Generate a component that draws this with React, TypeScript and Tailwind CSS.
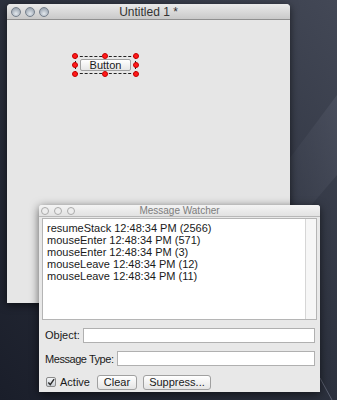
import React from "react";

const font = { fontFamily: '"Liberation Sans", Arial, sans-serif' };

function Lights({ active }: { active: boolean }) {
	if (active) {
		return (
			<div className="flex gap-[4px]">
				{[0, 1, 2].map((i) => (
					<span
						key={i}
						className="block w-[10px] h-[10px] rounded-full border border-[#76808c] bg-[radial-gradient(circle_at_50%_70%,#e2e7ec_0%,#b0b9c3_55%,#8a94a0_100%)]"
					/>
				))}
			</div>
		);
	}
	return (
		<div className="flex gap-[5px]">
			{[0, 1, 2].map((i) => (
				<span
					key={i}
					className="block w-[8px] h-[8px] rounded-full border border-[#aaaaaa] bg-[#ededed]"
				/>
			))}
		</div>
	);
}

function Handle({ x, y }: { x: number; y: number }) {
	return (
		<span
			className="absolute w-[6px] h-[6px] rounded-full bg-[#ff1a1a] border border-[#c40000]"
			style={{ left: x - 3, top: y - 3 }}
		/>
	);
}

function Wallpaper() {
	return (
		<svg className="absolute inset-0" width="337" height="400" viewBox="0 0 337 400">
			<defs>
				<linearGradient id="bg" x1="1" y1="0" x2="0" y2="1">
					<stop offset="0" stopColor="#434856" />
					<stop offset="0.45" stopColor="#2e3340" />
					<stop offset="1" stopColor="#1a1e2a" />
				</linearGradient>
				<linearGradient id="band" x1="1" y1="0" x2="0" y2="1">
					<stop offset="0" stopColor="#4e5362" />
					<stop offset="1" stopColor="#363b48" />
				</linearGradient>
			</defs>
			<rect width="337" height="400" fill="url(#bg)" />
			<polygon points="337,95 290,158 290,230 337,175" fill="url(#band)" opacity="0.7" />
			<line x1="320" y1="378" x2="332" y2="400" stroke="#5a6070" strokeWidth="1" />
		</svg>
	);
}

export default function App() {
	const messages = [
		"resumeStack 12:48:34 PM (2566)",
		"mouseEnter 12:48:34 PM (571)",
		"mouseEnter 12:48:34 PM (3)",
		"mouseLeave 12:48:34 PM (12)",
		"mouseLeave 12:48:34 PM (11)",
	];

	return (
		<div className="relative w-[337px] h-[400px] overflow-hidden text-[#1a1a1a]" style={font}>
			<Wallpaper />

			{/* main stack window */}
			<div className="absolute left-[7px] top-[4px] w-[283px] h-[299px] flex flex-col rounded-t-[4px] bg-[#e6e6e6] shadow-[0_2px_8px_rgba(0,0,0,0.6)]">
				<div className="relative h-[16px] shrink-0 flex items-center px-[4px] rounded-t-[4px] border-b border-[#8f8f8f] bg-[linear-gradient(#eaeaea,#c9c9c9)]">
					<Lights active />
					<span className="absolute left-0 right-0 text-center text-[12px] leading-[16px] text-[#333]">
						Untitled 1 *
					</span>
				</div>
				<div className="relative flex-1">
					<div className="absolute left-[68px] top-[36px] w-[61px] h-[18px] border border-dashed border-[#222]">
						<div className="absolute left-[4px] top-[2px] w-[51px] h-[12px] rounded-[2px] border border-[#a0a0a0] bg-[linear-gradient(#ffffff,#e6e6e6)] flex items-center justify-center text-[11px] leading-none">
							Button
						</div>
					</div>
					<div className="absolute left-[68px] top-[36px]">
						<Handle x={0} y={0} />
						<Handle x={30} y={0} />
						<Handle x={61} y={0} />
						<Handle x={0} y={9} />
						<Handle x={61} y={9} />
						<Handle x={0} y={18} />
						<Handle x={30} y={18} />
						<Handle x={61} y={18} />
					</div>
				</div>
			</div>

			{/* message watcher palette */}
			<div className="absolute left-[39px] top-[205px] w-[281px] h-[187px] flex flex-col rounded-t-[3px] bg-[#e8e8e8] shadow-[0_2px_10px_rgba(0,0,0,0.6)] text-[11px]">
				<div className="relative h-[12px] shrink-0 flex items-center px-[2px] rounded-t-[3px] border-b border-[#b8b8b8] bg-[linear-gradient(#f4f4f4,#e2e2e2)]">
					<Lights active={false} />
					<span className="absolute left-0 right-0 text-center text-[10px] leading-[12px] text-[#7d7d7d]">
						Message Watcher
					</span>
				</div>

				<div className="mx-[3px] mt-[1px] h-[102px] shrink-0 flex border border-[#b5b5b5] bg-white">
					<div className="flex-1 pl-[4px] pt-[3px]">
						{messages.map((m, i) => (
							<div key={i} className="leading-[12px] whitespace-nowrap">
								{m}
							</div>
						))}
					</div>
					<div className="w-[11px] border-l border-[#d6d6d6] bg-[#f6f6f6]" />
				</div>

				<div className="flex items-center shrink-0 mt-[7px] pl-[6px] pr-[5px]">
					<span className="w-[38px] shrink-0 whitespace-nowrap">Object:</span>
					<div className="flex-1 h-[15px] border border-[#b0b0b0] bg-white" />
				</div>

				<div className="flex items-center shrink-0 mt-[7px] pl-[6px] pr-[5px]">
					<span className="w-[72px] shrink-0 whitespace-nowrap tracking-[-0.45px]">Message Type:</span>
					<div className="flex-1 h-[15px] border border-[#b0b0b0] bg-white" />
				</div>

				<div className="flex items-center shrink-0 mt-[7px] pl-[7px]">
					<span className="w-[10px] h-[10px] flex items-center justify-center rounded-[2px] border border-[#8a8a8a] bg-[linear-gradient(#f4f6f8,#c9ced4)]">
						<svg width="9" height="9" viewBox="0 0 9 9">
							<path d="M1.5 4.5 L3.7 7 L8 0.8" fill="none" stroke="#2a2a2a" strokeWidth="1.6" />
						</svg>
					</span>
					<span className="ml-[4px] whitespace-nowrap">Active</span>
					<button className="ml-[7px] w-[40px] h-[15px] rounded-[3px] border border-[#a0a0a0] bg-[linear-gradient(#ffffff,#e4e4e4)] text-[11px] leading-none">
						Clear
					</button>
					<button className="ml-[6px] w-[68px] h-[15px] rounded-[3px] border border-[#a0a0a0] bg-[linear-gradient(#ffffff,#e4e4e4)] text-[11px] leading-none">
						Suppress...
					</button>
				</div>
			</div>
		</div>
	);
}
